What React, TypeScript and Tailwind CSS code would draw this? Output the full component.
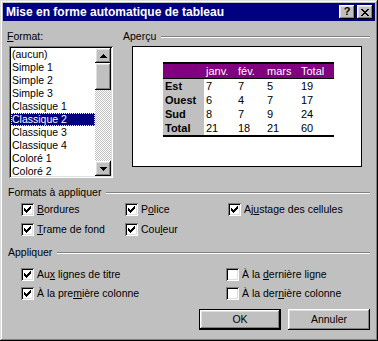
import React from "react";

const raised =
  "shadow-[inset_-1px_-1px_#000,inset_1px_1px_#fff,inset_-2px_-2px_#808080,inset_2px_2px_#dfdfdf]";
const sunken =
  "shadow-[inset_1px_1px_#808080,inset_-1px_-1px_#fff,inset_2px_2px_#000,inset_-2px_-2px_#dfdfdf]";

function CheckBox({ checked, children }: { checked: boolean; children: React.ReactNode }) {
  return (
    <div className="flex items-center gap-[3px] h-[13px]">
      <div className={`w-[13px] h-[13px] bg-white shrink-0 flex items-center justify-center ${sunken}`}>
        {checked && (
          <svg width="7" height="7" viewBox="0 0 7 7" shapeRendering="crispEdges">
            <path
              fill="#000"
              d="M6 0h1v1H6z M5 1h2v1H5z M0 2h1v1H0z M4 2h3v1H4z M0 3h2v1H0z M3 3h3v1H3z M0 4h5v1H0z M1 5h3v1H1z M2 6h1v1H2z"
            />
          </svg>
        )}
      </div>
      <span className="whitespace-nowrap leading-[13px]">{children}</span>
    </div>
  );
}

function GroupHeader({ label }: { label: string }) {
  return (
    <div className="flex items-center h-[13px]">
      <span className="whitespace-nowrap leading-[13px]">{label}</span>
      <div className="flex-1 ml-[5px] h-[2px] border-t border-b border-t-[#808080] border-b-white" />
    </div>
  );
}

function U({ children }: { children: React.ReactNode }) {
  return <span className="underline decoration-1 underline-offset-[1px]">{children}</span>;
}

function Arrow({ down }: { down?: boolean }) {
  return (
    <svg width="7" height="4" viewBox="0 0 7 4" shapeRendering="crispEdges">
      <path
        fill="#000"
        d={
          down
            ? "M0 0h7v1H0z M1 1h5v1H1z M2 2h3v1H2z M3 3h1v1H3z"
            : "M3 0h1v1H3z M2 1h3v1H2z M1 2h5v1H1z M0 3h7v1H0z"
        }
      />
    </svg>
  );
}

const items = [
  "(aucun)",
  "Simple 1",
  "Simple 2",
  "Simple 3",
  "Classique 1",
  "Classique 2",
  "Classique 3",
  "Classique 4",
  "Coloré 1",
  "Coloré 2",
];

function ListBox() {
  return (
    <div className={`ml-[2px] mt-[3px] w-[104px] h-[132px] p-[2px] bg-white flex ${sunken}`}>
      <div className="flex-1 overflow-hidden">
        {items.map((it) => {
          const sel = it === "Classique 2";
          return (
            <div
              key={it}
              className={
                sel
                  ? "h-[13px] leading-[13px] pl-[1px] bg-[#000080] text-white outline outline-1 outline-dotted outline-[#ffff80] -outline-offset-1 whitespace-nowrap"
                  : "h-[13px] leading-[13px] pl-[1px] whitespace-nowrap"
              }
            >
              {it}
            </div>
          );
        })}
      </div>
      <div className="w-[16px] flex flex-col">
        <div className={`h-[15px] bg-[#c0c0c0] flex items-center justify-center ${raised}`}>
          <Arrow />
        </div>
        <div className={`h-[27px] bg-[#c0c0c0] ${raised}`} />
        <div className="flex-1 bg-[image:conic-gradient(#c0c0c0_25%,#fff_0_50%,#c0c0c0_0_75%,#fff_0)] bg-[length:2px_2px]" />
        <div className={`h-[15px] bg-[#c0c0c0] flex items-center justify-center ${raised}`}>
          <Arrow down />
        </div>
      </div>
    </div>
  );
}

const rows = [
  ["Est", "7", "7", "5", "19"],
  ["Ouest", "6", "4", "7", "17"],
  ["Sud", "8", "7", "9", "24"],
  ["Total", "21", "18", "21", "60"],
];

function Preview() {
  return (
    <div className="mt-[3px] ml-[9px] w-[230px] h-[121px] border border-black bg-white">
      <div className="mt-[15px] ml-[30px] w-[171px] text-[11px] leading-[14px]">
        <div className="h-[2px] bg-black" />
        <div className="h-[14px] bg-[#800080] text-white flex">
          <div className="w-[41px]" />
          <div className="w-[32px] pl-[2px]">janv.</div>
          <div className="w-[29px] pl-[2px]">fév.</div>
          <div className="w-[34px] pl-[2px]">mars</div>
          <div className="w-[35px] pl-[2px]">Total</div>
        </div>
        <div className="h-[1px] bg-black" />
        {rows.map((r) => (
          <div key={r[0]} className="h-[14px] flex">
            <div className="w-[41px] pl-[2px] bg-[#c0c0c0] font-bold">{r[0]}</div>
            <div className="w-[32px] pl-[2px]">{r[1]}</div>
            <div className="w-[29px] pl-[2px]">{r[2]}</div>
            <div className="w-[34px] pl-[2px]">{r[3]}</div>
            <div className="w-[35px] pl-[2px]">{r[4]}</div>
          </div>
        ))}
        <div className="h-[2px] bg-black" />
      </div>
    </div>
  );
}

export default function App() {
  return (
    <div
      className={`w-[378px] h-[341px] bg-[#c0c0c0] p-[3px] flex flex-col text-black text-[10.5px] leading-[13px] font-['Liberation_Sans',Arial,sans-serif] shadow-[inset_-1px_-1px_#000,inset_1px_1px_#dfdfdf,inset_-2px_-2px_#808080,inset_2px_2px_#fff]`}
    >
      {/* Title bar */}
      <div className="h-[18px] bg-[#000080] flex items-center pl-[3px] pr-[2px]">
        <span className="text-white font-bold text-[12px] leading-[18px] whitespace-nowrap">
          Mise en forme automatique de tableau
        </span>
        <div className="ml-auto flex items-center gap-[2px]">
          <div className={`w-[16px] h-[14px] bg-[#c0c0c0] flex items-center justify-center ${raised}`}>
            <span className="font-bold text-[11px] leading-[11px] -mt-[1px]">?</span>
          </div>
          <div className={`w-[16px] h-[14px] bg-[#c0c0c0] flex items-center justify-center ${raised}`}>
            <svg width="8" height="7" viewBox="0 0 8 7" shapeRendering="crispEdges">
              <path
                fill="#000"
                d="M0 0h2v1H0z M6 0h2v1H6z M1 1h2v1H1z M5 1h2v1H5z M2 2h4v1H2z M3 3h2v1H3z M2 4h4v1H2z M1 5h2v1H1z M5 5h2v1H5z M0 6h2v1H0z M6 6h2v1H6z"
              />
            </svg>
          </div>
        </div>
      </div>

      {/* Top section */}
      <div className="flex pt-[9px]">
        <div className="ml-[4px] flex flex-col">
          <div className="h-[13px] leading-[13px]">
            <U>F</U>ormat:
          </div>
          <ListBox />
        </div>
        <div className="ml-[10px] w-[247px] flex flex-col">
          <GroupHeader label="Aperçu" />
          <Preview />
        </div>
      </div>

      {/* Formats à appliquer */}
      <div className="mt-[8px] ml-[5px] mr-[5px]">
        <GroupHeader label="Formats à appliquer" />
      </div>
      <div className="mt-[4px] ml-[18px] grid grid-cols-[104px_103px_1fr] gap-y-[7px]">
        <CheckBox checked>
          <U>B</U>ordures
        </CheckBox>
        <CheckBox checked>
          P<U>o</U>lice
        </CheckBox>
        <CheckBox checked>
          Aj<U>u</U>stage des cellules
        </CheckBox>
        <CheckBox checked>
          <U>T</U>rame de fond
        </CheckBox>
        <CheckBox checked>
          Cou<U>l</U>eur
        </CheckBox>
        <div />
      </div>

      {/* Appliquer */}
      <div className="mt-[10px] ml-[5px] mr-[5px]">
        <GroupHeader label="Appliquer" />
      </div>
      <div className="mt-[9px] ml-[18px] grid grid-cols-[205px_1fr] gap-y-[6px]">
        <CheckBox checked>
          Au<U>x</U> lignes de titre
        </CheckBox>
        <CheckBox checked={false}>
          À la <U>d</U>ernière ligne
        </CheckBox>
        <CheckBox checked>
          À la pre<U>m</U>ière colonne
        </CheckBox>
        <CheckBox checked={false}>
          À la der<U>n</U>ière colonne
        </CheckBox>
      </div>

      {/* Buttons */}
      <div className="mt-[9px] mr-[5px] flex justify-end gap-[7px]">
        <div className="w-[82px] h-[21px] border border-black">
          <div
            className={`w-full h-full bg-[#c0c0c0] flex items-center justify-center shadow-[inset_-1px_-1px_#000,inset_1px_1px_#fff,inset_-2px_-2px_#808080,inset_2px_2px_#dfdfdf]`}
          >
            OK
          </div>
        </div>
        <div className={`w-[82px] h-[21px] bg-[#c0c0c0] flex items-center justify-center ${raised}`}>
          Annuler
        </div>
      </div>
    </div>
  );
}
